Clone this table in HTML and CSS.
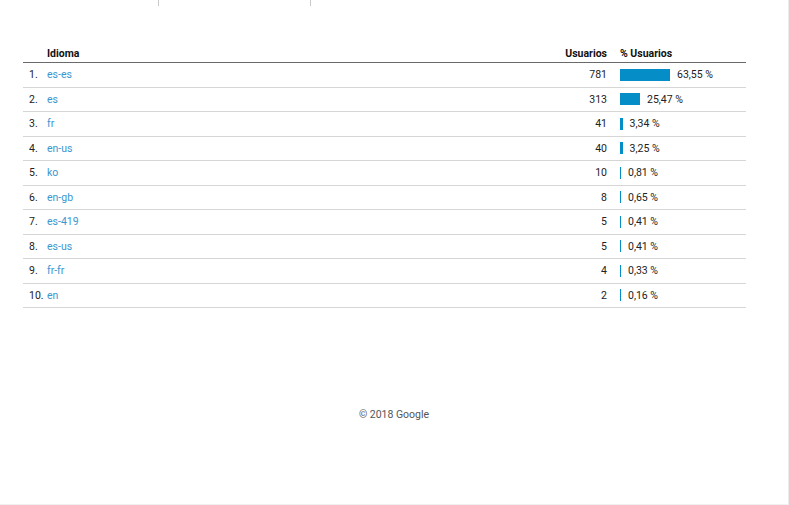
FILE: index.html
```html
<!DOCTYPE html>
<html lang="es">
<head>
    <meta charset="UTF-8">
    <title>Idioma - Usuarios</title>
    <link rel="stylesheet" href="styles.css">
</head>
<body>
    <div class="page">
        <div class="tabs">
            <div class="tab"></div>
        </div>

        <div class="report">
            <div class="row head">
                <div class="num"></div>
                <div class="name">Idioma</div>
                <div class="users">Usuarios</div>
                <div class="pct">% Usuarios</div>
            </div>
            <div id="rows"></div>
        </div>

        <div class="footer">© 2018 Google</div>
    </div>

    <script>
        const data = [
            { lang: "es-es", users: 781, pct: 63.55 },
            { lang: "es", users: 313, pct: 25.47 },
            { lang: "fr", users: 41, pct: 3.34 },
            { lang: "en-us", users: 40, pct: 3.25 },
            { lang: "ko", users: 10, pct: 0.81 },
            { lang: "en-gb", users: 8, pct: 0.65 },
            { lang: "es-419", users: 5, pct: 0.41 },
            { lang: "es-us", users: 5, pct: 0.41 },
            { lang: "fr-fr", users: 4, pct: 0.33 },
            { lang: "en", users: 2, pct: 0.16 }
        ];

        document.getElementById('rows').innerHTML = data.map((d, i) => `
            <div class="row">
                <div class="num">${i + 1}.</div>
                <div class="name"><a href="#">${d.lang}</a></div>
                <div class="users">${d.users}</div>
                <div class="pct">
                    <span class="bar" style="width: ${Math.max(d.pct * 0.787, 1).toFixed(1)}px"></span>
                    <span>${d.pct.toFixed(2).replace('.', ',')} %</span>
                </div>
            </div>
        `).join('');
    </script>
</body>
</html>
```

FILE: styles.css
```css
* {
    margin: 0;
    padding: 0;
    box-sizing: border-box;
}
body {
    font-family: Roboto, "Liberation Sans", sans-serif;
    font-size: 10.5px;
    color: #222;
    background: #fff;
}
.page {
    width: 789px;
    height: 505px;
    border-right: 1px solid #ececec;
    border-bottom: 1px solid #f0f0f0;
}
.tabs {
    height: 6px;
}
.tab {
    margin-left: 158px;
    width: 153px;
    height: 6px;
    border-left: 1px solid #c8c8c8;
    border-right: 1px solid #c8c8c8;
}
.report {
    margin: 38px 0 0 23px;
    width: 723px;
}
.row {
    display: grid;
    grid-template-columns: 24px 1fr 80px 139px;
    align-items: center;
    height: 24.5px;
    border-bottom: 1px solid #d6d6d6;
}
.row.head {
    height: 19px;
    font-weight: 700;
    color: #111;
    border-bottom: 1px solid #6a6a6a;
}
.num {
    padding-left: 6px;
}
.name a {
    color: #3b96cf;
    text-decoration: none;
}
.users {
    text-align: right;
}
.pct {
    display: flex;
    align-items: center;
    gap: 7px;
    padding-left: 13px;
}
.bar {
    display: block;
    height: 12px;
    background: #058dc7;
}
.footer {
    margin-top: 100px;
    text-align: center;
    color: #555;
    line-height: 14px;
}
```
